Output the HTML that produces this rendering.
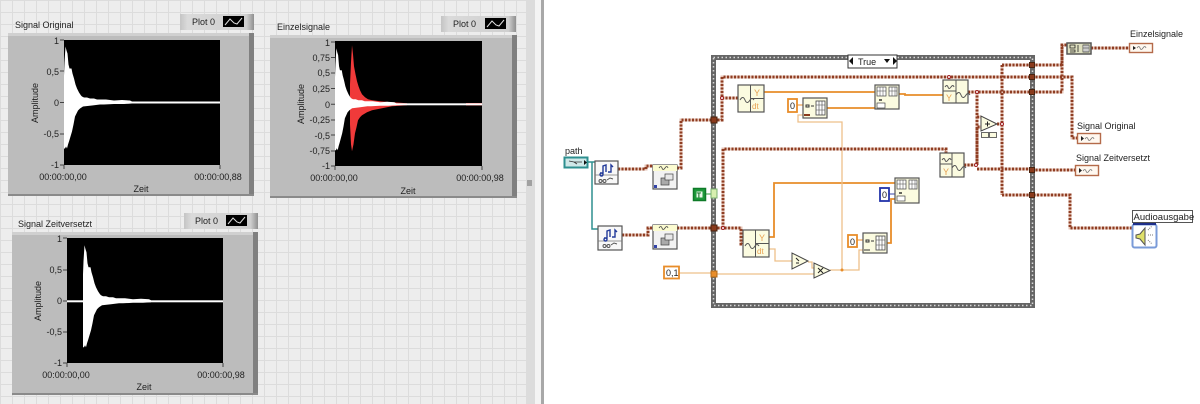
<!DOCTYPE html>
<html><head><meta charset="utf-8"><style>
html,body{margin:0;padding:0;background:#fff}
svg{display:block}
text{font-family:"Liberation Sans",sans-serif;font-size:9px;fill:#222}
.w0{fill:none;stroke:#e6c3b5;stroke-width:3}
.w1{fill:none;stroke:#8f3d22;stroke-width:3;stroke-dasharray:2 1.5}
.o{fill:none;stroke:#e88d2a;stroke-width:1.8}
.l{fill:none;stroke:#eec08a;stroke-width:1.3}
.n{fill:#fbfbe0;stroke:#555;stroke-width:1.2}
.g{fill:#f8f8f8;stroke:#555;stroke-width:1.2}
.t{fill:#8a3a1c;stroke:#4a2410;stroke-width:1}
</style></head><body>
<svg width="1200" height="404" viewBox="0 0 1200 404" xmlns="http://www.w3.org/2000/svg">
<defs>
<pattern id="grid" width="12" height="12" patternUnits="userSpaceOnUse"><rect width="12" height="12" fill="#ededed"/><path d="M0 .5H12M.5 0V12" stroke="#dcdcdc" stroke-width="1"/></pattern>
<linearGradient id="leg" x1="0" x2="1" y1="0" y2="0"><stop offset="0" stop-color="#c4c4c4"/><stop offset=".1" stop-color="#dadada"/><stop offset=".9" stop-color="#cfcfcf"/><stop offset="1" stop-color="#8f8f8f"/></linearGradient>
<path id="wave" d="M0 -27 L.5 -40 1.500 -56 2.500 -52 3.500 -49 4.500 -38 5 -36 5.500 -34 7.500 -34 8.500 -29 10 -24 11.500 -18 13 -14 15 -10 17 -7 18 -6 20 -5 23 -5 26 -4 30 -4 33 -3 36 -3 42 -3 50 -2 58 -2.500 66 -2 68 -1 68 1 60 1.500 50 1.500 40 2 36 2 28 3 19 4 16 6 14 8 12 12 11 14 9.500 22 8 29 6.500 34 5 39 4 42 3 46 2 44 1 46 0 46Z"/>
<path id="redw" d="M0 -20 L1 -42 2 -59 3 -50 4 -38 5.500 -30 7 -23 8.500 -18 10 -14 12 -10 15 -7 18 -5 22 -4 30 -3 42 -2 50 -1.500 57 -1 57 1 50 1.500 42 2 32 4 22 6 17 8 12 11 10 13 8 16 6.500 23 5 29 3.500 40 2 47 1 40 0 20Z"/>
<g id="ico"><rect width="21" height="11" fill="#000"/><path d="M2 9 L7 3 11 7 14 8 19 2" fill="none" stroke="#ddd" stroke-width="1"/></g>
<g id="wf"><path d="M2 7q3 -5 5 0t5 0q2 -3 4 0" fill="none" stroke="#555" stroke-width="1"/></g>
</defs>

<rect x="0" y="0" width="526" height="404" fill="url(#grid)"/>
<rect x="526" y="0" width="9" height="404" fill="#dcdcdc"/>
<rect x="535" y="0" width="6" height="404" fill="#f4f4f4"/>
<rect x="541" y="0" width="3" height="404" fill="#a8a8a8"/>
<path d="M527 181h5M527 183h5M527 185h5" stroke="#666" stroke-width="1"/>

<!-- Graph 1 -->
<g>
<rect x="180" y="14" width="74" height="16" fill="url(#leg)"/><text x="192" y="25">Plot 0</text><use href="#ico" x="223" y="16"/>
<text x="15" y="28">Signal Original</text>
<rect x="8" y="33" width="246" height="163" fill="#bcbcbc"/>
<rect x="8" y="33" width="246" height="3" fill="#d0d0d0"/><rect x="249" y="33" width="5" height="163" fill="#808080"/><rect x="8" y="194" width="246" height="2" fill="#8a8a8a"/>
<rect x="64" y="40" width="156" height="125" fill="#000"/>
<rect x="64" y="101.500" width="156" height="2" fill="#fff"/>
<use href="#wave" x="64" y="102.500" fill="#fff"/>
<path d="M60 40h4M60 71h4M60 102.500h4M60 134h4M60 165h4M64 165v4M220 165v4" stroke="#444" stroke-width="1"/>
<g text-anchor="end"><text x="59" y="44">1</text><text x="59" y="75">0,5</text><text x="59" y="106">0</text><text x="59" y="137">-0,5</text><text x="59" y="168">-1</text></g>
<text x="63" y="180" text-anchor="middle">00:00:00,00</text><text x="218" y="180" text-anchor="middle">00:00:00,88</text>
<text x="141" y="192" text-anchor="middle">Zeit</text>
<text transform="translate(38,103) rotate(-90)" text-anchor="middle">Amplitude</text>
</g>

<!-- Graph 2 -->
<g>
<rect x="441" y="16" width="75" height="16" fill="url(#leg)"/><text x="453" y="27">Plot 0</text><use href="#ico" x="485" y="18"/>
<text x="277" y="30">Einzelsignale</text>
<rect x="270" y="35" width="247" height="163" fill="#bcbcbc"/>
<rect x="270" y="35" width="247" height="3" fill="#d0d0d0"/><rect x="512" y="35" width="5" height="163" fill="#808080"/><rect x="270" y="196" width="247" height="2" fill="#8a8a8a"/>
<rect x="335" y="41" width="147" height="125" fill="#000"/>
<use href="#redw" x="350" y="104.300" fill="#f03a3a"/>
<rect x="466" y="103" width="16" height="2.500" fill="#f03a3a"/>
<rect x="335" y="103.300" width="147" height="2" fill="#fff"/>
<use href="#wave" x="335" y="104.300" fill="#fff" transform="translate(33.500 0) scale(.9 1)"/>
<path d="M331 42h4M331 57.500h4M331 73h4M331 88.500h4M331 104.300h4M331 120h4M331 135h4M331 151h4M331 166h4M335 166v4M482 166v4" stroke="#444" stroke-width="1"/>
<g text-anchor="end"><text x="330" y="46">1</text><text x="330" y="61">0,75</text><text x="330" y="76">0,5</text><text x="330" y="92">0,25</text><text x="330" y="108">0</text><text x="330" y="123">-0,25</text><text x="330" y="139">-0,5</text><text x="330" y="154">-0,75</text><text x="330" y="169">-1</text></g>
<text x="334" y="181" text-anchor="middle">00:00:00,00</text><text x="480" y="181" text-anchor="middle">00:00:00,98</text>
<text x="408" y="194" text-anchor="middle">Zeit</text>
<text transform="translate(304,104) rotate(-90)" text-anchor="middle">Amplitude</text>
</g>

<!-- Graph 3 -->
<g>
<rect x="184" y="213" width="74" height="16" fill="url(#leg)"/><text x="195" y="224">Plot 0</text><use href="#ico" x="226" y="215"/>
<text x="18" y="227">Signal Zeitversetzt</text>
<rect x="12" y="232" width="246" height="163" fill="#bcbcbc"/>
<rect x="12" y="232" width="246" height="3" fill="#d0d0d0"/><rect x="253" y="232" width="5" height="163" fill="#808080"/><rect x="12" y="393" width="246" height="2" fill="#8a8a8a"/>
<rect x="67" y="238" width="156" height="125" fill="#000"/>
<rect x="67" y="300.300" width="156" height="2" fill="#fff"/>
<use href="#wave" x="83" y="301.300" fill="#fff"/>
<path d="M63 238h4M63 270h4M63 301h4M63 332h4M63 363h4M67 363v4M223 363v4" stroke="#444" stroke-width="1"/>
<g text-anchor="end"><text x="62" y="242">1</text><text x="62" y="273">0,5</text><text x="62" y="304">0</text><text x="62" y="335">-0,5</text><text x="62" y="366">-1</text></g>
<text x="66" y="378" text-anchor="middle">00:00:00,00</text><text x="221" y="378" text-anchor="middle">00:00:00,98</text>
<text x="144" y="390" text-anchor="middle">Zeit</text>
<text transform="translate(41,301) rotate(-90)" text-anchor="middle">Amplitude</text>
</g>

<!-- Block diagram: structure -->
<rect x="713.500" y="57.500" width="319" height="248" fill="#fff" stroke="#666" stroke-width="5"/>
<rect x="713.500" y="57.500" width="319" height="248" fill="none" stroke="#d8d8d8" stroke-width="1.500" stroke-dasharray="1.500 2.500"/>
<rect x="848" y="55" width="49" height="13" fill="#fff" stroke="#333" stroke-width="1"/>
<text x="858" y="65">True</text>
<path d="M853 57v8l-4 -4zM893 57v8l4 -4zM884 59h6l-3 4z" fill="#111"/>

<!-- thin wires -->
<path d="M588 162H592V229H598M592 162H595" fill="none" stroke="#2e8f8f" stroke-width="1.500"/>
<path d="M827 108H875M764 92H875M899 94H905V95H943M769 237H774V183H895M887 243H891V199H895" class="o"/>
<path d="M803 115H798V122H842V270M769 249H775V261H792M808 262H812V268H815M830 270H859V250H863M679 273H714M717 274H815" class="l"/>
<path d="M797 105H803M857 240H863" fill="none" stroke="#e88d2a" stroke-width="1"/>
<path d="M889 194H895" fill="none" stroke="#3344aa" stroke-width="1"/>
<path d="M706 194H711" fill="none" stroke="#2e9e3e" stroke-width="1"/>

<!-- thick wires -->
<g id="wires">
<path class="w0" d="M618 169H646V166H653M677 168H681V120H714M622 235H648V228H653M677 228H714M714 120H722V77H1032M722 98H738M714 228H741V244H743M723 228V149H946V153M968 92H1032M977 92V165M964 165H977M977 117H981M977 165V127H981M977 169H1032M997 124H1002M1002 65V195M1002 65H1032M1032 65H1062V45H1067M1032 92H1062V45M1032 77H1072V138H1077M1032 170H1075M1002 195H1070V228H1132M1091 48H1129M949 77V80"/>
<path class="w1" d="M618 169H646V166H653M677 168H681V120H714M622 235H648V228H653M677 228H714M714 120H722V77H1032M722 98H738M714 228H741V244H743M723 228V149H946V153M968 92H1032M977 92V165M964 165H977M977 117H981M977 165V127H981M977 169H1032M997 124H1002M1002 65V195M1002 65H1032M1032 65H1062V45H1067M1032 92H1062V45M1032 77H1072V138H1077M1032 170H1075M1002 195H1070V228H1132M1091 48H1129M949 77V80"/>
</g>

<!-- tunnels -->
<rect x="711" y="117" width="6" height="6" class="t"/><rect x="711" y="225" width="6" height="6" class="t"/>
<rect x="711" y="271" width="6" height="6" fill="#e88d2a" stroke="#b06a18"/>
<rect x="711" y="189" width="6" height="9" fill="#d8f0b0" stroke="#7ab070"/>
<g class="t"><rect x="1029.500" y="62.500" width="5" height="5"/><rect x="1029.500" y="74.500" width="5" height="5"/><rect x="1029.500" y="89.500" width="5" height="5"/><rect x="1029.500" y="167.500" width="5" height="5"/><rect x="1029.500" y="192.500" width="5" height="5"/></g>
<g fill="#fff" stroke="#a02020" stroke-width="1"><circle cx="722" cy="98" r="1.500"/><circle cx="723" cy="228" r="1.500"/><circle cx="977" cy="92" r="1.500"/><circle cx="976" cy="165" r="1.500"/><circle cx="1002" cy="124" r="1.500"/><circle cx="949" cy="77" r="1.500"/></g>
<circle cx="842" cy="270" r="1.500" fill="#e88d2a"/>

<!-- path control -->
<text x="565" y="154">path</text>
<rect x="564.500" y="157.500" width="23" height="10" fill="#cfe8e8" stroke="#2e8f8f" stroke-width="2"/>
<path d="M569 161l5 1h8M574 162l3 2" stroke="#333" fill="none" stroke-width=".8"/>
<path d="M584 160v5l3 -2.500z" fill="#111"/>

<!-- read wave nodes -->
<g><rect x="595" y="161" width="23" height="23" class="g"/><path d="M595 175H618" stroke="#777" stroke-width=".8"/><path d="M600 173h3v-7l3-1v7M601.500 173a1.500 1.500 0 1 0 .01 0M608 172h3v-7l2 2" fill="none" stroke="#223a9a" stroke-width="1.400"/><path d="M599 181a1.500 1.500 0 1 0 3 0a1.500 1.500 0 1 0 -3 0M603 181a1.500 1.500 0 1 0 3 0a1.500 1.500 0 1 0 -3 0M607 180l3-2 3 1" fill="none" stroke="#555" stroke-width="1"/></g>
<g><rect x="598" y="226" width="24" height="24" class="g"/><path d="M598 241H622" stroke="#777" stroke-width=".8"/><path d="M604 238h3v-7l3-1v7M605.500 238a1.500 1.500 0 1 0 .01 0M612 237h3v-7l2 2" fill="none" stroke="#223a9a" stroke-width="1.400"/><path d="M603 246a1.500 1.500 0 1 0 3 0a1.500 1.500 0 1 0 -3 0M607 246a1.500 1.500 0 1 0 3 0a1.500 1.500 0 1 0 -3 0M611 245l3-2 3 1" fill="none" stroke="#555" stroke-width="1"/></g>

<!-- waveform to dyn nodes -->
<g><rect x="653" y="165" width="24" height="24" fill="#f2f2f2" stroke="#555" stroke-width="1.200"/><rect x="653" y="165" width="24" height="6" fill="#fbfbd0"/><path d="M659 168q2-3 3 0t3 0 3 0" fill="none" stroke="#444" stroke-width=".8"/><rect x="661" y="178" width="8" height="7" fill="#aaa" stroke="#444" stroke-width=".7"/><rect x="665" y="174" width="8" height="6" fill="#e8e8e8" stroke="#444" stroke-width=".7"/><rect x="654" y="185" width="3" height="3" fill="#3344aa"/></g>
<g><rect x="653" y="225" width="24" height="24" fill="#f2f2f2" stroke="#555" stroke-width="1.200"/><rect x="653" y="225" width="24" height="6" fill="#fbfbd0"/><path d="M659 228q2-3 3 0t3 0 3 0" fill="none" stroke="#444" stroke-width=".8"/><rect x="661" y="238" width="8" height="7" fill="#aaa" stroke="#444" stroke-width=".7"/><rect x="665" y="234" width="8" height="6" fill="#e8e8e8" stroke="#444" stroke-width=".7"/><rect x="654" y="245" width="3" height="3" fill="#3344aa"/></g>

<!-- bool const -->
<rect x="693.500" y="188.500" width="12" height="12" fill="#1f9a3c" stroke="#0e7a28" stroke-width="1.500"/>
<rect x="696.500" y="191.500" width="6" height="6" fill="#e8f8e8"/>
<text x="696.800" y="197.500" style="font-size:7px;font-weight:bold;fill:#0b6a20">T</text>

<!-- get waveform components -->
<g><rect x="738" y="85" width="26" height="27" class="n"/><path d="M750.500 85V112M750.500 98.500H764" stroke="#555" stroke-width="1"/><use href="#wf" x="738" y="93"/><text x="754" y="96" style="fill:#e8a050;font-size:9px">Y</text><text x="752" y="109" style="fill:#e8a050;font-size:8px">dt</text></g>
<g><rect x="743" y="230" width="26" height="27" class="n"/><path d="M755.500 230V257M755.500 243.500H769" stroke="#555" stroke-width="1"/><use href="#wf" x="743" y="239"/><text x="759" y="241" style="fill:#e8a050;font-size:9px">Y</text><text x="757" y="254" style="fill:#e8a050;font-size:8px">dt</text></g>

<!-- build waveform -->
<g><rect x="943" y="80" width="25" height="23" class="n"/><path d="M956 80V103M943 91H956" stroke="#555" stroke-width="1"/><path d="M945 87q2-3 3 0t3 0 3 0" fill="none" stroke="#555"/><text x="946" y="101" style="fill:#e8a050">Y</text><use href="#wf" x="954" y="88"/></g>
<g><rect x="940" y="153" width="24" height="24" class="n"/><path d="M952 153V177M940 164H952" stroke="#555" stroke-width="1"/><path d="M942 160q2-3 3 0t3 0 3 0" fill="none" stroke="#555"/><text x="943" y="175" style="fill:#e8a050">Y</text><use href="#wf" x="950" y="161"/></g>

<!-- constants -->
<g fill="#fff" stroke="#e88d2a" stroke-width="1.800"><rect x="788" y="99" width="9" height="13"/><rect x="848" y="235" width="9" height="12"/><rect x="664" y="266.500" width="15" height="12"/></g>
<rect x="880" y="188" width="9" height="13" fill="#fff" stroke="#2233aa" stroke-width="1.800"/>
<text x="790" y="109" style="font-size:9px">0</text><text x="850" y="245" style="font-size:9px">0</text><text x="882" y="198" style="font-size:9px">0</text><text x="666" y="276" style="font-size:9px">0,1</text>

<!-- array ops -->
<g><rect x="803" y="98" width="24" height="20" fill="#fbfbe0" stroke="#555" stroke-width="1.200"/><path d="M806 105h3v2h-3zM811 106l3 0" stroke="#333" fill="none" stroke-width="1"/><rect x="816" y="101" width="9" height="14" fill="#fff" stroke="#444" stroke-width=".8"/><path d="M819 101v14M822 101v14M816 105h9M816 110h9" stroke="#444" stroke-width=".6"/><path d="M804 115h6" stroke="#8a3a1c" stroke-width="2"/></g>
<g><rect x="863" y="233" width="24" height="20" fill="#fbfbe0" stroke="#555" stroke-width="1.200"/><path d="M866 240h3v2h-3zM871 241l3 0" stroke="#333" fill="none" stroke-width="1"/><rect x="876" y="236" width="9" height="14" fill="#fff" stroke="#444" stroke-width=".8"/><path d="M879 236v14M882 236v14M876 240h9M876 245h9" stroke="#444" stroke-width=".6"/><path d="M864 250h6" stroke="#333" stroke-width="1"/></g>
<g><rect x="875" y="85" width="24" height="24" fill="#fbfbe0" stroke="#555" stroke-width="1.200"/><rect x="877" y="87" width="9" height="9" fill="#fff" stroke="#444" stroke-width=".7"/><rect x="889" y="87" width="8" height="9" fill="#fff" stroke="#444" stroke-width=".7"/><path d="M880 87v9M883 87v9M877 91h9M892 87v9M895 87v9M889 91h8" stroke="#444" stroke-width=".5"/><rect x="877" y="103" width="8" height="5" fill="#fff" stroke="#444" stroke-width=".7"/><path d="M879 100h3" stroke="#333" stroke-width="1.500"/></g>
<g><rect x="895" y="178" width="24" height="25" fill="#fbfbe0" stroke="#555" stroke-width="1.200"/><rect x="897" y="180" width="9" height="9" fill="#fff" stroke="#444" stroke-width=".7"/><rect x="909" y="180" width="8" height="9" fill="#fff" stroke="#444" stroke-width=".7"/><path d="M900 180v9M903 180v9M897 184h9M912 180v9M915 180v9M909 184h8" stroke="#444" stroke-width=".5"/><rect x="897" y="196" width="8" height="5" fill="#fff" stroke="#444" stroke-width=".7"/><path d="M899 193h3" stroke="#333" stroke-width="1.500"/></g>

<!-- triangles -->
<path d="M792 253V269L808 261Z" fill="#fbfbe0" stroke="#444" stroke-width="1"/>
<path d="M796 258l3 3M796 263h3" stroke="#222" stroke-width="1" fill="none"/>
<path d="M814 263V278L830 270.500Z" fill="#fbfbe0" stroke="#444" stroke-width="1"/>
<path d="M818 268l5 5M823 268l-5 5" stroke="#222" stroke-width="1"/>
<path d="M981 116V131L997 124Z" fill="#fbfbe0" stroke="#444" stroke-width="1"/>
<path d="M985 124h5M987.500 121.500v5" stroke="#222" stroke-width="1"/>
<rect x="981.500" y="132.500" width="7" height="5" fill="#fbfbe0" stroke="#444" stroke-width=".8"/><rect x="989.500" y="132.500" width="7" height="5" fill="#fbfbe0" stroke="#444" stroke-width=".8"/>

<!-- merge node -->
<rect x="1067" y="43" width="24" height="11" fill="#dfe0c0" stroke="#555" stroke-width="1.500"/>
<path d="M1070 45h5v3h-5zM1070 50h5v2h-5M1078 45v7" stroke="#222" fill="none" stroke-width=".8"/><rect x="1083" y="45" width="6" height="7" fill="#fff" stroke="#333" stroke-width=".7"/><path d="M1085 45v7M1087 45v7M1083 48h6" stroke="#333" stroke-width=".5"/>

<!-- indicators -->
<g fill="#fff8f0" stroke="#b46a4a" stroke-width="1.400"><rect x="1129.500" y="43.500" width="23" height="9"/><rect x="1077.500" y="133.500" width="23" height="10"/><rect x="1075.500" y="165.500" width="23" height="10"/></g>
<path d="M1133 46v4l3-2zM1081 136v5l3-2.500zM1079 168v5l3-2.500z" fill="#222"/>
<path d="M1137 48q2-3 3 0t3 0 3 0M1085 139q2-3 3 0t3 0 3 0M1083 171q2-3 3 0t3 0 3 0" fill="none" stroke="#777" stroke-width=".8"/>
<text x="1130" y="37">Einzelsignale</text>
<text x="1077" y="129">Signal Original</text>
<text x="1076" y="161">Signal Zeitversetzt</text>

<!-- audio -->
<rect x="1132.500" y="224.500" width="24" height="23" rx="2" fill="#fff" stroke="#7a9bd8" stroke-width="2"/>
<rect x="1133" y="222" width="23" height="3" fill="#1e2f8a"/>
<path d="M1136 235l4-1 5-6v17l-5-6-4-1z" fill="#dfe06a" stroke="#555" stroke-width="1"/>
<path d="M1148 230l4-4M1148 235h6M1148 240l4 4" stroke="#777" stroke-width="1" stroke-dasharray="1 1"/>
<rect x="1132.500" y="210.500" width="60" height="12" fill="#fff" stroke="#555" stroke-width="1"/>
<text x="1133.500" y="220" style="font-size:9.500px">Audioausgabe</text>
</svg>
</body></html>
